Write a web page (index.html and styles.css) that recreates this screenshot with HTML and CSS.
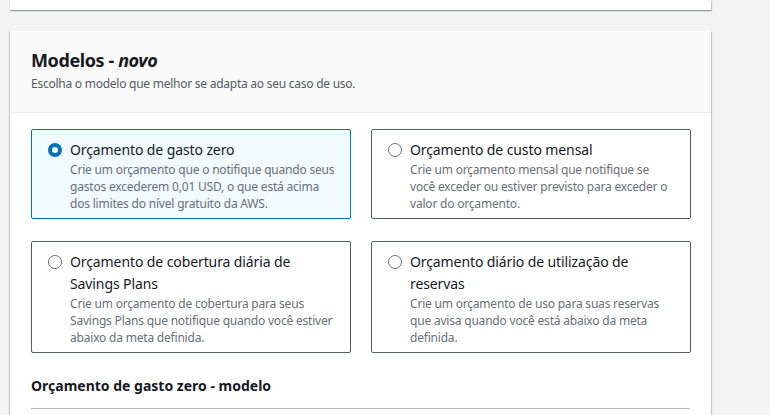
FILE: index.html
```html
<!DOCTYPE html>
<html lang="pt-BR">
<head>
<meta charset="utf-8">
<link rel="stylesheet" href="styles.css">
</head>
<body>
<div class="page">
  <div class="prev-card"></div>
  <section class="panel">
    <header class="panel-header">
      <h2 class="panel-title">Modelos - <em>novo</em></h2>
      <p class="panel-desc">Escolha o modelo que melhor se adapta ao seu caso de uso.</p>
    </header>
    <div class="panel-body">
      <div class="tiles">
        <label class="tile selected">
          <span class="radio checked"></span>
          <span class="tile-text">
            <span class="tile-title">Orçamento de gasto zero</span>
            <span class="tile-desc">Crie um orçamento que o notifique quando seus gastos excederem 0,01 USD, o que está acima dos limites do nível gratuito da AWS.</span>
          </span>
        </label>
        <label class="tile">
          <span class="radio"></span>
          <span class="tile-text">
            <span class="tile-title">Orçamento de custo mensal</span>
            <span class="tile-desc">Crie um orçamento mensal que notifique se você exceder ou estiver previsto para exceder o valor do orçamento.</span>
          </span>
        </label>
        <label class="tile">
          <span class="radio"></span>
          <span class="tile-text">
            <span class="tile-title">Orçamento de cobertura diária de Savings Plans</span>
            <span class="tile-desc">Crie um orçamento de cobertura para seus Savings Plans que notifique quando você estiver abaixo da meta definida.</span>
          </span>
        </label>
        <label class="tile">
          <span class="radio"></span>
          <span class="tile-text">
            <span class="tile-title">Orçamento diário de utilização de reservas</span>
            <span class="tile-desc">Crie um orçamento de uso para suas reservas que avisa quando você está abaixo da meta definida.</span>
          </span>
        </label>
      </div>
      <h3 class="sub-title">Orçamento de gasto zero - modelo</h3>
      <div class="divider"></div>
    </div>
  </section>
</div>
</body>
</html>
```

FILE: styles.css
```css
html, body {
  margin: 0;
  padding: 0;
  background: #f2f3f3;
  font-family: "Noto Sans", "Open Sans", sans-serif;
  color: #16191f;
  overflow: hidden;
}
.page {
  width: 701px;
  margin-left: 10px;
}
.prev-card {
  height: 10px;
  background: #ffffff;
  box-shadow: 0 1px 1px 0 rgba(0, 28, 36, 0.3), 1px 1px 1px 0 rgba(0, 28, 36, 0.15);
}
.panel {
  margin-top: 21px;
  background: #ffffff;
  box-shadow: 0 1px 1px 0 rgba(0, 28, 36, 0.3), 1px 1px 1px 0 rgba(0, 28, 36, 0.15), -1px 1px 1px 0 rgba(0, 28, 36, 0.15);
  height: 420px;
}
.panel-header {
  background: #fafafa;
  border-bottom: 1px solid #eaeded;
  padding: 17px 20px 0 21px;
  height: 64px;
}
.panel-title {
  margin: 0;
  font-size: 18px;
  font-weight: 700;
  line-height: 24px;
  letter-spacing: -0.4px;
}
.panel-title em {
  font-weight: 700;
}
.panel-desc {
  margin: 4px 0 0;
  font-size: 12px;
  line-height: 16px;
  color: #545b64;
  letter-spacing: -0.25px;
}
.panel-body {
  padding: 16px 20px 0 21px;
}
.tiles {
  display: grid;
  grid-template-columns: 320px 320px;
  column-gap: 20px;
  row-gap: 22px;
}
.tile {
  display: flex;
  align-items: flex-start;
  gap: 8px;
  border: 1px solid #545b64;
  border-radius: 2px;
  padding: 13px 15px 6px 16px;
}
.tile.selected {
  border-color: #0073bb;
  background: #f1faff;
}
.radio {
  flex: none;
  width: 12px;
  height: 12px;
  margin-top: 0;
  border: 1px solid #687078;
  border-radius: 50%;
  background: #ffffff;
  box-sizing: content-box;
}
.radio.checked {
  width: 6px;
  height: 6px;
  border: 4px solid #0073bb;
}
.tile-text {
  display: flex;
  flex-direction: column;
  min-width: 0;
}
.tile-title {
  font-size: 14px;
  line-height: 22px;
  margin-top: -4px;
  color: #16191f;
  letter-spacing: -0.1px;
}
.tile-desc {
  font-size: 12px;
  line-height: 17px;
  color: #687078;
  letter-spacing: -0.2px;
}
.sub-title {
  margin: 23px 0 0;
  font-size: 14px;
  font-weight: 700;
  line-height: 20px;
}
.divider {
  margin-top: 12px;
  border-top: 1px solid #aab7b8;
  width: 659px;
}
```
